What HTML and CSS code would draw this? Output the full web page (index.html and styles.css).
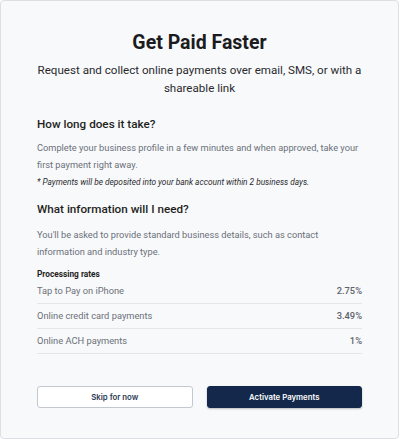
FILE: index.html
```html
<!DOCTYPE html>
<html lang="en">
<head>
<meta charset="utf-8">
<title>Get Paid Faster</title>
<link rel="stylesheet" href="styles.css">
</head>
<body>
<div class="card">
  <h1 class="title">Get Paid Faster</h1>
  <p class="subtitle">Request and collect online payments over email, SMS, or with a shareable link</p>

  <h2 class="heading first">How long does it take?</h2>
  <p class="text">Complete your business profile in a few minutes and when approved, take your first payment right away.</p>
  <p class="note">* Payments will be deposited into your bank account within 2 business days.</p>

  <h2 class="heading second">What information will I need?</h2>
  <p class="text text-2">You'll be asked to provide standard business details, such as contact information and industry type.</p>

  <div class="rates">
    <div class="rates-title">Processing rates</div>
    <div class="rate-row"><span>Tap to Pay on iPhone</span><span class="rate">2.75%</span></div>
    <div class="rate-row"><span>Online credit card payments</span><span class="rate">3.49%</span></div>
    <div class="rate-row"><span>Online ACH payments</span><span class="rate">1%</span></div>
  </div>

  <div class="actions">
    <button class="btn btn-secondary">Skip for now</button>
    <button class="btn btn-primary">Activate Payments</button>
  </div>
</div>
</body>
</html>
```
FILE: styles.css
```css
* { box-sizing: border-box; }
html, body { margin: 0; padding: 0; }
body {
  width: 400px;
  height: 439px;
  font-family: Roboto, "Liberation Sans", sans-serif;
  background: #ffffff;
}
.card {
  width: 399px;
  height: 439px;
  border: 1px solid #dcdfe3;
  border-radius: 4px;
  background: #f8f9fb;
  padding: 31px 36px 0;
}
.title {
  margin: 0;
  font-size: 19.5px;
  line-height: 22px;
  font-weight: 700;
  color: #1c1c1e;
  text-align: center;
}
.subtitle {
  margin: 7px 0 0;
  font-size: 11.6px;
  line-height: 18px;
  color: #2a2a2e;
  text-align: center;
}
.heading {
  margin: 0;
  font-size: 11.7px;
  line-height: 18px;
  font-weight: 500;
  color: #1f1f22;
}
.heading.first { margin-top: 18px; }
.heading.second { margin-top: 12px; }
.text {
  margin: 5.5px 0 0;
  font-size: 9.25px;
  line-height: 17px;
  color: #6b7079;
}
.text-2 { margin-top: 7.5px; }
.note {
  margin: 3.5px 0 0;
  font-size: 8.3px;
  line-height: 12px;
  font-style: italic;
  color: #2a2a2e;
}
.rates { margin-top: 9.5px; }
.rates-title {
  font-size: 8.3px;
  line-height: 10px;
  font-weight: 700;
  color: #1f1f22;
}
.rate-row {
  display: flex;
  justify-content: space-between;
  padding: 5px 0 6px;
  font-size: 9.3px;
  line-height: 13px;
  color: #6b7079;
  border-bottom: 1px solid #e4e6ea;
}
.rate { font-weight: 500; color: #5d626b; }
.actions {
  display: flex;
  gap: 14px;
  margin-top: 32px;
}
.btn {
  flex: 1;
  height: 22px;
  border-radius: 3px;
  font-family: Inter, Roboto, sans-serif;
  font-size: 7.8px;
  font-weight: 600;
  padding: 0;
}
.btn-secondary {
  background: #ffffff;
  border: 1px solid #c3c8d0;
  color: #2c3a55;
}
.btn-primary {
  background: #13284a;
  border: 1px solid #13284a;
  color: #ffffff;
  box-shadow: 0 1px 2px rgba(0,0,0,0.25);
}
```
